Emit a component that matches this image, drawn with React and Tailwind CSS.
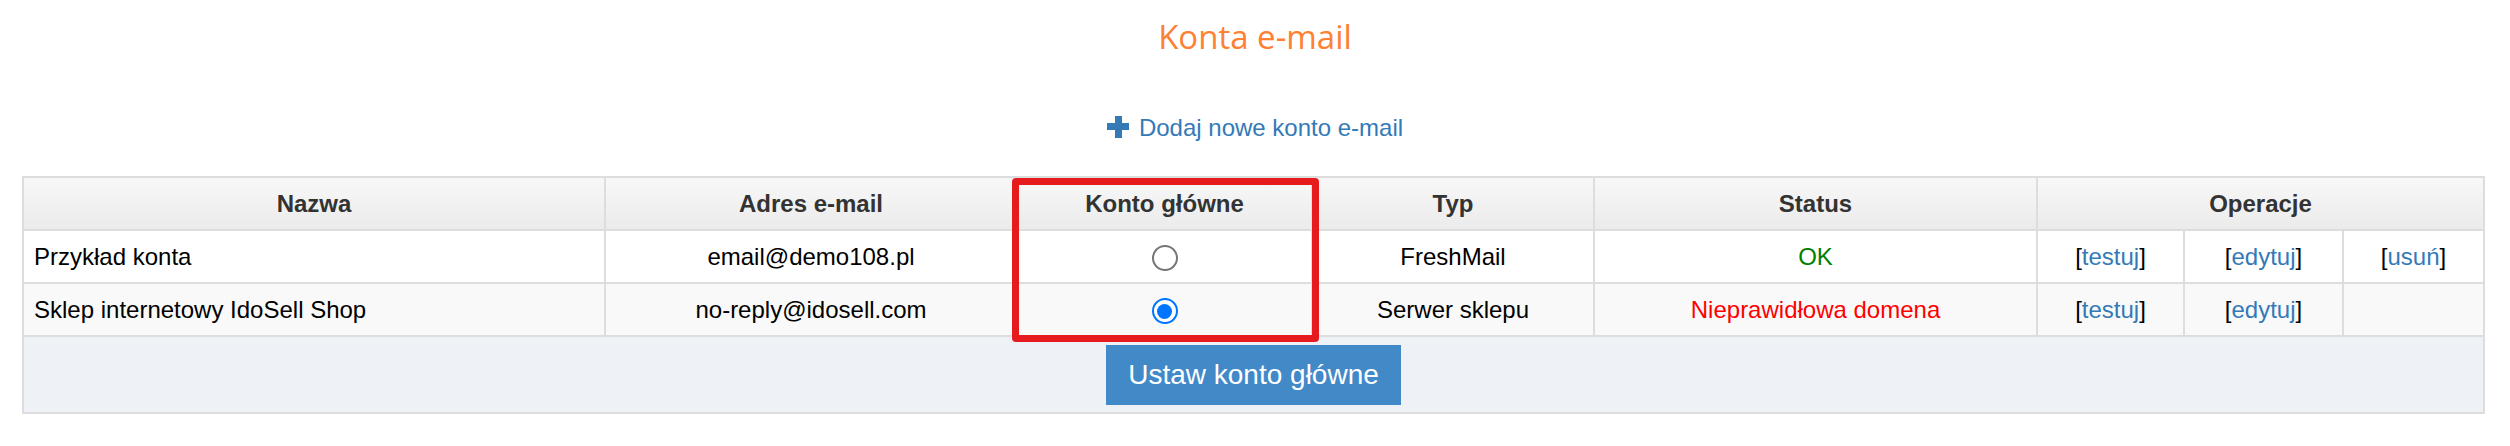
import React from 'react';

const accounts = [
  {
    name: 'Przykład konta',
    email: 'email@demo108.pl',
    main: false,
    type: 'FreshMail',
    status: 'OK',
    ok: true,
    canDelete: true,
  },
  {
    name: 'Sklep internetowy IdoSell Shop',
    email: 'no-reply@idosell.com',
    main: true,
    type: 'Serwer sklepu',
    status: 'Nieprawidłowa domena',
    ok: false,
    canDelete: false,
  },
];

const Bracket = ({ label }) => (
  <span className="text-black">
    [<a href="#" className="text-[#337ab7] hover:underline">{label}</a>]
  </span>
);

const Radio = ({ checked }) =>
  checked ? (
    <span className="inline-flex w-[26px] h-[26px] rounded-full border-2 border-[#0075ff] bg-white items-center justify-center align-middle">
      <span className="w-[15px] h-[15px] rounded-full bg-[#0075ff]" />
    </span>
  ) : (
    <span className="inline-block w-[26px] h-[26px] rounded-full border-2 border-[#767676] bg-white align-middle" />
  );

const th = 'border-2 border-[#dddddd] font-bold text-[#333333] text-center h-[53px] p-0';
const td = 'border-2 border-[#dddddd] text-center h-[53px] p-0';

export default function App() {
  return (
    <div className="bg-white w-[2510px] h-[446px] font-['Liberation_Sans',Arial,sans-serif] text-[24px] text-black">
      <h1 className="pt-[14px] text-center font-['Open_Sans',sans-serif] text-[33px] leading-[45px] font-normal text-[#fe8033]">
        Konta e-mail
      </h1>

      <div className="mt-[55px] flex justify-center">
        <a href="#" className="flex items-center gap-[10px] text-[#337ab7] leading-[27px]">
          <svg width="22" height="22" viewBox="0 0 22 22" className="mt-[-2px]">
            <rect x="8" y="0" width="7" height="22" fill="#337ab7" />
            <rect x="0" y="7" width="22" height="7" fill="#337ab7" />
          </svg>
          Dodaj nowe konto e-mail
        </a>
      </div>

      <div className="relative ml-[22px] mt-[35px] w-[2461px]">
        <table className="w-[2461px] table-fixed border-collapse">
          <colgroup>
            <col className="w-[582px]" />
            <col className="w-[412px]" />
            <col className="w-[295px]" />
            <col className="w-[282px]" />
            <col className="w-[443px]" />
            <col className="w-[147px]" />
            <col className="w-[159px]" />
            <col className="w-[141px]" />
          </colgroup>
          <thead>
            <tr className="bg-gradient-to-b from-[#f8f8f8] to-[#ebebeb]">
              <th className={th}>Nazwa</th>
              <th className={th}>Adres e-mail</th>
              <th className={th}>Konto główne</th>
              <th className={th}>Typ</th>
              <th className={th}>Status</th>
              <th className={th} colSpan={3}>Operacje</th>
            </tr>
          </thead>
          <tbody>
            {accounts.map((a, i) => (
              <tr key={a.email} className={i % 2 === 0 ? 'bg-white' : 'bg-[#f9f9f9]'}>
                <td className={`${td} text-left pl-[10px]`}>{a.name}</td>
                <td className={td}>{a.email}</td>
                <td className={td}>
                  <Radio checked={a.main} />
                </td>
                <td className={td}>{a.type}</td>
                <td className={`${td} ${a.ok ? 'text-[#008000]' : 'text-[#ff0000]'}`}>{a.status}</td>
                <td className={td}>
                  <Bracket label="testuj" />
                </td>
                <td className={td}>
                  <Bracket label="edytuj" />
                </td>
                <td className={td}>{a.canDelete && <Bracket label="usuń" />}</td>
              </tr>
            ))}
            <tr className="bg-[#eef1f6]">
              <td colSpan={8} className="border-2 border-[#dddddd] text-center pt-[8px] pb-[7px]">
                <button className="h-[60px] px-[22px] bg-[#4289c8] text-white text-[28px] leading-[60px]">
                  Ustaw konto główne
                </button>
              </td>
            </tr>
          </tbody>
        </table>

        {/* czerwona ramka wokół kolumny "Konto główne" */}
        <div className="absolute left-[990px] top-[2px] w-[307px] h-[164px] border-[7px] border-[#e61b1e] rounded-[4px] pointer-events-none" />
      </div>
    </div>
  );
}
